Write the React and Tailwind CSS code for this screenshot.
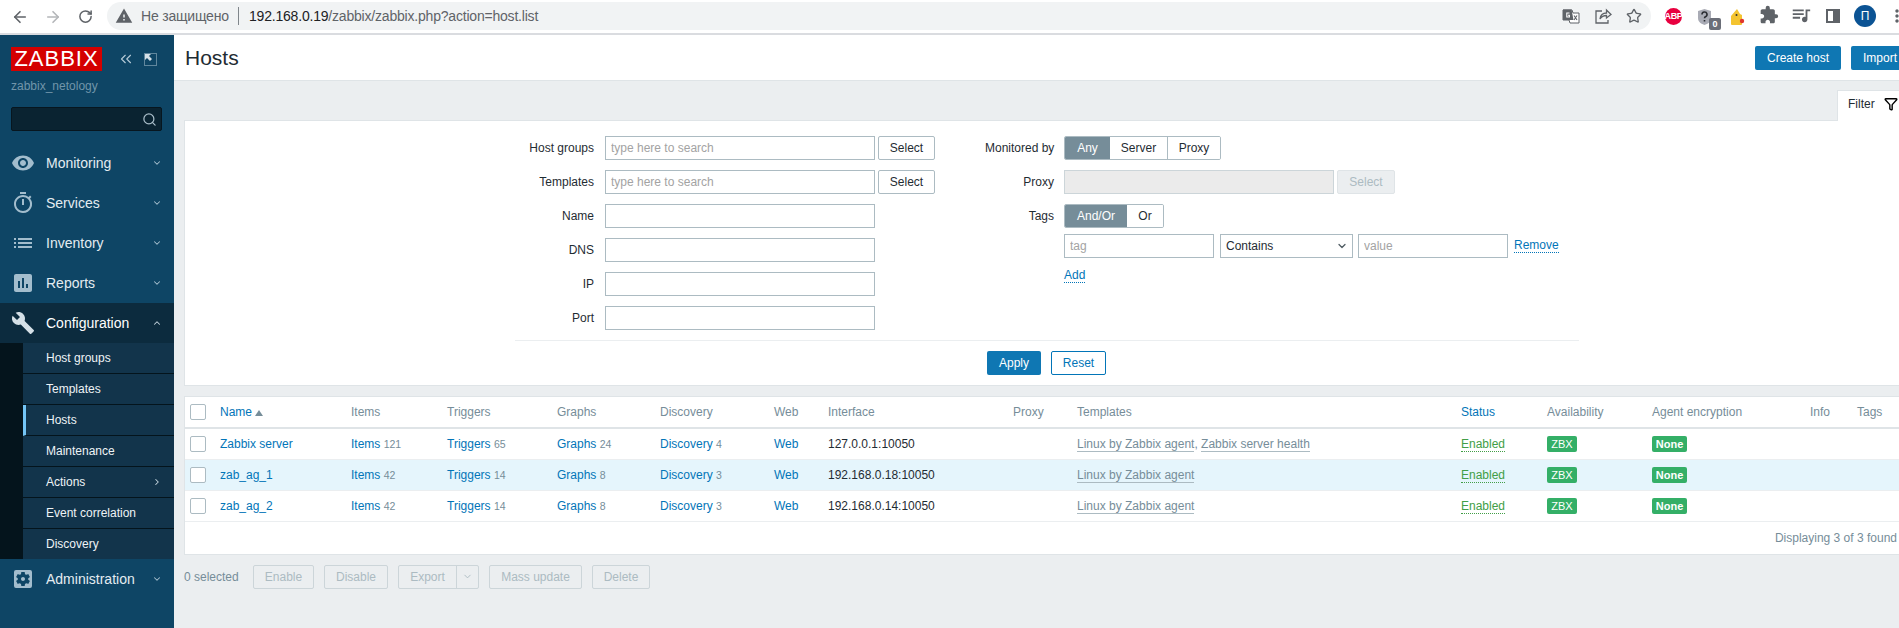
import { ArrowLeft, ArrowRight, RotateCw, Star, Search, ChevronDown, ChevronUp, ChevronRight, ChevronsLeft, Filter } from "lucide-react";
import { MdRemoveRedEye, MdOutlineTimer, MdList, MdAssessment, MdBuild, MdSettingsApplications, MdWarning, MdExtension, MdQueueMusic, MdMoreVert } from "react-icons/md";

const font = { fontFamily: '"Liberation Sans", Arial, sans-serif' };

const Toolbar = () => (
    <div className="h-[35px] bg-white border-b-2 border-[#dadce0] flex items-start text-[#5f6368]">
        <div className="w-[107px] h-[33px] flex items-center shrink-0">
            <ArrowLeft className="w-[18px] h-[18px] ml-[11px]" strokeWidth={2.2} />
            <ArrowRight className="w-[18px] h-[18px] ml-[15px] text-[#b4b6b9]" strokeWidth={2.2} />
            <RotateCw className="w-[15px] h-[15px] ml-[16px]" strokeWidth={2.4} />
        </div>
        <div className="mt-[2px] w-[1544px] h-[28px] rounded-full bg-[#f1f3f4] flex items-center shrink-0">
            <MdWarning className="w-[18px] h-[18px] ml-[8px]" />
            <span className="ml-[8px] text-[14px] text-[#5f6368] w-[90px] whitespace-nowrap tracking-[-0.2px]">Не защищено</span>
            <span className="ml-[7px] w-px h-[18px] bg-[#80868b]" />
            <span className="ml-[10px] text-[14px] text-[#5f6368] whitespace-nowrap tracking-[-0.2px]">
                <span className="text-[#202124]">192.168.0.19</span>/zabbix/zabbix.php?action=host.list
            </span>
            <div className="ml-auto flex items-center gap-[14px] pr-[9px]">
                <svg width="18" height="18" viewBox="0 0 18 18">
                    <path d="M1 3h9l1 3h6v10H8l-1-3H1z" fill="#fff" stroke="#5f6368" />
                    <path d="M1 2.500h8.500l2 10.500H1z" fill="#5f6368" />
                    <path d="M7.500 6H4.800v4h2.600V8.200H6" fill="none" stroke="#fff" strokeWidth="1.100" />
                    <path d="M12 8.500l3 4.500M15 8.500l-3 4.500" stroke="#5f6368" strokeWidth="1.100" />
                </svg>
                <svg width="18" height="18" viewBox="0 0 18 18" fill="none" stroke="#5f6368" strokeWidth="1.300">
                    <path d="M8 4H2v12h12v-3" />
                    <path d="M6 12c.5-4 3-6 6.500-6V3l4.500 4.500L12.500 11V8.500C10 8.500 7.500 9.500 6 12z" />
                </svg>
                <Star className="w-[16px] h-[16px]" strokeWidth={2} />
            </div>
        </div>
        <div className="relative flex-1 h-[33px]">
            <div className="absolute left-[14px] top-[8px] w-[17px] h-[17px] rounded-full bg-[#e8003f] flex items-center justify-center text-white text-[9px] font-bold tracking-[-0.4px]">ABP</div>
            <svg className="absolute left-[45px] top-[8px]" width="17" height="18" viewBox="0 0 17 18">
                <path d="M2 3l6.500-2L15 3v7c0 4-3.500 6-6.500 7C5.500 16 2 14 2 10z" fill="#a9abb5" />
                <path d="M6 6.500a2.500 2.500 0 1 1 3.500 2.300c-.7.300-1 .8-1 1.500M8.500 12v1.500" fill="none" stroke="#2b2d33" strokeWidth="1.600" />
            </svg>
            <div className="absolute left-[58px] top-[18px] w-[12px] h-[12px] rounded-[2px] bg-[#6b6e78] text-white text-[9px] font-bold leading-[12px] text-center">0</div>
            <svg className="absolute left-[79px] top-[8px]" width="16" height="18" viewBox="0 0 16 18">
                <path d="M1 8l6-7 3 5 2 1v9a1 1 0 0 1-1 1H2a1 1 0 0 1-1-1z" fill="#f4c430" />
                <circle cx="6.500" cy="7" r="1" fill="#333" />
                <circle cx="12" cy="13" r="2.200" fill="#e0362c" />
            </svg>
            <MdExtension className="absolute left-[108px] top-[5px] w-[20px] h-[20px] text-[#5f6368]" />
            <MdQueueMusic className="absolute left-[139px] top-[4px] w-[22px] h-[22px] text-[#5f6368]" />
            <div className="absolute left-[175px] top-[9px] w-[14px] h-[14px] border-2 border-[#5f6368] flex justify-end">
                <div className="w-[5px] bg-[#5f6368]" />
            </div>
            <div className="absolute left-[203px] top-[5px] w-[22px] h-[22px] rounded-full bg-[#0b5394] flex items-center justify-center text-white text-[12px]">П</div>
            <MdMoreVert className="absolute left-[236px] top-[6px] w-[20px] h-[20px] text-[#5f6368]" />
        </div>
    </div>
);

const navBefore = [
    { label: "Monitoring", Icon: MdRemoveRedEye },
    { label: "Services", Icon: MdOutlineTimer },
    { label: "Inventory", Icon: MdList },
    { label: "Reports", Icon: MdAssessment },
];

const subItems = ["Host groups", "Templates", "Hosts", "Maintenance", "Actions", "Event correlation", "Discovery"];

const NavItem = ({ label, Icon, active }) => (
    <div className={`h-[40px] flex items-center pl-[11px] text-[14px] ${active ? "bg-[#0c2b3e] text-white" : "text-[#e4ecf1]"}`}>
        <Icon className={`w-[24px] h-[24px] shrink-0 ${active ? "text-[#d5e0e7]" : "text-[#a3bdcd]"}`} />
        <span className="ml-[11px] flex-1">{label}</span>
        {active ? (
            <ChevronUp className="w-[10px] h-[10px] mr-[12px] text-[#c5d5df]" strokeWidth={2.5} />
        ) : (
            <ChevronDown className="w-[10px] h-[10px] mr-[12px] text-[#a9c1d0]" strokeWidth={2.5} />
        )}
    </div>
);

const Sidebar = () => (
    <div className="w-[174px] shrink-0 bg-[#0e4565] flex flex-col">
        <div className="pt-[12px] pl-[11px] flex items-center">
            <div className="w-[91px] h-[24px] bg-[#d40000] text-white text-[22px] leading-[24px] tracking-[1px] text-center">ZABBIX</div>
            <ChevronsLeft className="w-[18px] h-[18px] ml-[15px] text-[#b5cad7]" strokeWidth={1.5} />
            <svg className="ml-[9px]" width="13" height="13" viewBox="0 0 13 13">
                <rect x="0.500" y="0.500" width="12" height="12" fill="none" stroke="#b5cad7" strokeDasharray="1 1" />
                <path d="M1 1h6L5 3l3 3-2 2-3-3-2 2z" fill="#d5e0e7" />
            </svg>
        </div>
        <div className="pl-[11px] mt-[8px] h-[14px] leading-[14px] text-[12px] text-[#7195aa]">zabbix_netology</div>
        <div className="ml-[11px] mt-[14px] w-[151px] h-[24px] bg-[#0a2331] border border-[#07161f] rounded-[2px] flex items-center justify-end pr-[4px]">
            <Search className="w-[15px] h-[15px] text-[#a9bdc9]" strokeWidth={2} />
        </div>
        <div className="mt-[12px]">
            {navBefore.map((n) => (
                <NavItem key={n.label} {...n} />
            ))}
            <NavItem label="Configuration" Icon={MdBuild} active />
            <div className="bg-[#04141c] pl-[23px]">
                {subItems.map((s, i) => (
                    <div
                        key={s}
                        className={`h-[31px] last:h-[30px] flex items-center text-[12px] text-[#eef3f6] bg-[#12344b] border-b border-[#04141c] last:border-b-0 ${s === "Hosts" ? "border-l-[3px] border-l-[#74c5f5] pl-[20px] bg-[#0e2e44]" : "pl-[23px]"}`}
                    >
                        <span className="flex-1">{s}</span>
                        {i === 4 && <ChevronRight className="w-[10px] h-[10px] mr-[12px] text-[#c5d5df]" strokeWidth={2.5} />}
                    </div>
                ))}
            </div>
            <NavItem label="Administration" Icon={MdSettingsApplications} />
        </div>
    </div>
);

const FieldRow = ({ label, children, w }) => (
    <div className="flex items-center h-[24px] mb-[10px]">
        <label className={`${w} shrink-0 text-right text-[#1f2c33] whitespace-nowrap`}>{label}</label>
        <div className="ml-[10px] flex items-center">{children}</div>
    </div>
);

const TextInput = ({ placeholder, className = "w-[270px]" }) => (
    <input
        placeholder={placeholder}
        className={`${className} h-[24px] border border-[#acbbc2] bg-white px-[5px] text-[12px] outline-none placeholder:text-[#a3a3a3]`}
    />
);

const SelectBtn = () => (
    <button className="ml-[3px] w-[57px] h-[24px] border border-[#acbbc2] rounded-[2px] bg-white text-[#1f2c33]">Select</button>
);

const Segment = ({ items, selected, widths }) => (
    <div className="flex h-[24px] rounded-[2px] border border-[#acbbc2] overflow-hidden">
        {items.map((item, i) => (
            <div
                key={item}
                className={`${widths[i]} flex items-center justify-center ${item === selected ? "bg-[#768d99] text-white" : "bg-white text-[#1f2c33]"} ${i > 0 && items[i - 1] !== selected ? "border-l border-[#acbbc2]" : ""}`}
            >
                {item}
            </div>
        ))}
    </div>
);

const FilterBox = () => (
    <div className="bg-white border border-[#dfe4e7] border-r-0 h-[266px]">
        <div className="flex h-[219px] pt-[15px]">
            <div className="w-[879px] shrink-0">
                <FieldRow label="Host groups" w="w-[409px]">
                    <div className="ml-px flex">
                        <TextInput placeholder="type here to search" />
                        <SelectBtn />
                    </div>
                </FieldRow>
                <FieldRow label="Templates" w="w-[409px]">
                    <div className="ml-px flex">
                        <TextInput placeholder="type here to search" />
                        <SelectBtn />
                    </div>
                </FieldRow>
                {["Name", "DNS", "IP", "Port"].map((l) => (
                    <FieldRow key={l} label={l} w="w-[409px]">
                        <div className="ml-px flex">
                            <TextInput />
                        </div>
                    </FieldRow>
                ))}
            </div>
            <div>
                <FieldRow label="Monitored by" w="w-[69px] -ml-[79px] pl-0">
                    <Segment items={["Any", "Server", "Proxy"]} selected="Any" widths={["w-[45px]", "w-[57px]", "w-[53px]"]} />
                </FieldRow>
                <FieldRow label="Proxy" w="w-[69px] -ml-[79px]">
                    <div className="w-[270px] h-[24px] border border-[#ccd5d9] bg-[#ebebeb]" />
                    <button className="ml-[3px] w-[58px] h-[24px] border border-[#dfe4e7] rounded-[2px] bg-[#ebeef0] text-[#acbbc2]">Select</button>
                </FieldRow>
                <div className="flex items-center h-[24px] mb-[6px]">
                    <label className="w-[69px] -ml-[79px] shrink-0 text-right text-[#1f2c33]">Tags</label>
                    <div className="ml-[10px]">
                        <Segment items={["And/Or", "Or"]} selected="And/Or" widths={["w-[62px]", "w-[36px]"]} />
                    </div>
                </div>
                <div className="flex items-center h-[24px]">
                    <TextInput placeholder="tag" className="w-[150px]" />
                    <div className="ml-[6px] w-[133px] h-[24px] border border-[#acbbc2] bg-white flex items-center justify-between pl-[5px] pr-[4px] text-[#1f2c33]">
                        Contains
                        <ChevronDown className="w-[12px] h-[12px] text-[#4f5b62]" strokeWidth={2.5} />
                    </div>
                    <TextInput placeholder="value" className="w-[150px] ml-[5px]" />
                    <a className="ml-[6px] text-[#0275b8] border-b border-dotted border-[#0275b8] leading-[13px]">Remove</a>
                </div>
                <a className="inline-block mt-[10px] text-[#0275b8] border-b border-dotted border-[#0275b8] leading-[14px]">Add</a>
            </div>
        </div>
        <div className="ml-[330px] w-[1064px] border-t border-[#ebeef0] pt-[10px] flex gap-[10px] pl-[472px]">
            <button className="w-[54px] h-[24px] rounded-[2px] bg-[#0f77b3] text-white">Apply</button>
            <button className="w-[55px] h-[24px] rounded-[2px] border border-[#0275b8] bg-white text-[#0275b8]">Reset</button>
        </div>
    </div>
);

const hosts = [
    { name: "Zabbix server", items: 121, triggers: 65, graphs: 24, discovery: 4, iface: "127.0.0.1:10050", templates: ["Linux by Zabbix agent", "Zabbix server health"] },
    { name: "zab_ag_1", items: 42, triggers: 14, graphs: 8, discovery: 3, iface: "192.168.0.18:10050", templates: ["Linux by Zabbix agent"], hover: true },
    { name: "zab_ag_2", items: 42, triggers: 14, graphs: 8, discovery: 3, iface: "192.168.0.14:10050", templates: ["Linux by Zabbix agent"] },
];

const CountLink = ({ label, n }) => (
    <span>
        <a className="text-[#0275b8]">{label}</a> <span className="text-[10.5px] text-[#768d99]">{n}</span>
    </span>
);

const Check = () => <div className="w-[16px] h-[16px] border border-[#acbbc2] rounded-[2px] bg-white" />;

const Badge = ({ children, className }) => (
    <span className={`${className} inline-block h-[16px] leading-[16px] rounded-[2px] bg-[#34af67] text-white text-[11px] text-center`}>{children}</span>
);

const HostTable = () => (
    <div className="mt-[10px] bg-white border border-[#dfe4e7] border-r-0">
        <table className="table-fixed w-[1714px] text-left">
            <colgroup>
                <col className="w-[35px]" />
                <col className="w-[131px]" />
                <col className="w-[96px]" />
                <col className="w-[110px]" />
                <col className="w-[103px]" />
                <col className="w-[114px]" />
                <col className="w-[54px]" />
                <col className="w-[185px]" />
                <col className="w-[64px]" />
                <col className="w-[384px]" />
                <col className="w-[86px]" />
                <col className="w-[105px]" />
                <col className="w-[158px]" />
                <col className="w-[47px]" />
                <col className="w-[42px]" />
            </colgroup>
            <thead>
                <tr className="h-[31px] border-b-2 border-[#dfe4e7] text-[#768d99]">
                    <th className="font-normal pl-[5px]"><Check /></th>
                    <th className="font-normal text-[#0275b8]">
                        Name
                        <span className="inline-block ml-[3px] align-middle w-0 h-0 border-x-[4px] border-x-transparent border-b-[6px] border-b-[#768d99]" />
                    </th>
                    <th className="font-normal">Items</th>
                    <th className="font-normal">Triggers</th>
                    <th className="font-normal">Graphs</th>
                    <th className="font-normal">Discovery</th>
                    <th className="font-normal">Web</th>
                    <th className="font-normal">Interface</th>
                    <th className="font-normal">Proxy</th>
                    <th className="font-normal">Templates</th>
                    <th className="font-normal text-[#0275b8]">Status</th>
                    <th className="font-normal">Availability</th>
                    <th className="font-normal">Agent encryption</th>
                    <th className="font-normal">Info</th>
                    <th className="font-normal">Tags</th>
                </tr>
            </thead>
            <tbody>
                {hosts.map((h) => (
                    <tr key={h.name} className={`h-[31px] border-b border-[#ebeef0] ${h.hover ? "bg-[#e5f5fc]" : ""}`}>
                        <td className="pl-[5px]"><Check /></td>
                        <td><a className="text-[#0275b8]">{h.name}</a></td>
                        <td><CountLink label="Items" n={h.items} /></td>
                        <td><CountLink label="Triggers" n={h.triggers} /></td>
                        <td><CountLink label="Graphs" n={h.graphs} /></td>
                        <td><CountLink label="Discovery" n={h.discovery} /></td>
                        <td><a className="text-[#0275b8]">Web</a></td>
                        <td className="text-[#1f2c33]">{h.iface}</td>
                        <td />
                        <td className="text-[#768d99]">
                            {h.templates.map((t, i) => (
                                <span key={t}>
                                    {i > 0 && <span>, </span>}
                                    <a className="border-b border-[#acbbc2]">{t}</a>
                                </span>
                            ))}
                        </td>
                        <td><a className="text-[#429e47] border-b border-dotted border-[#429e47]">Enabled</a></td>
                        <td><Badge className="w-[30px]">ZBX</Badge></td>
                        <td><Badge className="w-[35px] font-bold">None</Badge></td>
                        <td />
                        <td />
                    </tr>
                ))}
            </tbody>
        </table>
        <div className="h-[32px] flex items-center justify-end pr-[2px] text-[#768d99]">Displaying 3 of 3 found</div>
    </div>
);

const DisabledBtn = ({ children, className }) => (
    <button className={`${className} h-[24px] border border-[#ccd5d9] rounded-[2px] bg-[#ebeef0] text-[#acbbc2]`}>{children}</button>
);

const BulkActions = () => (
    <div className="mt-[10px] flex items-center text-[#768d99]">
        <span className="w-[69px]">0 selected</span>
        <DisabledBtn className="w-[61px]">Enable</DisabledBtn>
        <DisabledBtn className="w-[64px] ml-[10px]">Disable</DisabledBtn>
        <div className="ml-[10px] flex h-[24px] w-[81px] border border-[#ccd5d9] rounded-[2px] text-[#acbbc2]">
            <span className="w-[58px] flex items-center justify-center border-r border-[#ccd5d9]">Export</span>
            <span className="flex-1 flex items-center justify-center"><ChevronDown className="w-[11px] h-[11px]" strokeWidth={2} /></span>
        </div>
        <DisabledBtn className="w-[93px] ml-[10px]">Mass update</DisabledBtn>
        <DisabledBtn className="w-[58px] ml-[10px]">Delete</DisabledBtn>
    </div>
);

const App = () => (
    <div className="w-[1899px] h-[628px] overflow-hidden flex flex-col text-[12px] bg-[#ebeef0]" style={font}>
        <Toolbar />
        <div className="flex flex-1 min-h-0">
            <Sidebar />
            <div className="flex-1 min-w-0 overflow-hidden">
                <div className="h-[46px] bg-white border-b border-[#dfe4e7] flex items-center pl-[11px]">
                    <h1 className="text-[21px] text-[#1f2c33] flex-1">Hosts</h1>
                    <button className="w-[86px] h-[24px] rounded-[2px] bg-[#0f77b3] text-white">Create host</button>
                    <button className="ml-[10px] w-[48px] h-[24px] rounded-l-[2px] bg-[#0f77b3] text-white text-left pl-[12px]">Import</button>
                </div>
                <div className="pl-[10px] pt-[9px]">
                    <div className="flex justify-end">
                        <div className="w-[62px] h-[31px] pb-[5px] bg-white border-l border-t border-[#dfe4e7] -mb-px relative flex items-center pl-[10px] text-[#1f2c33]">
                            Filter
                            <Filter className="w-[14px] h-[14px] ml-[9px] text-black" strokeWidth={2.4} />
                        </div>
                    </div>
                    <FilterBox />
                    <HostTable />
                    <BulkActions />
                </div>
            </div>
        </div>
    </div>
);

export default App;
